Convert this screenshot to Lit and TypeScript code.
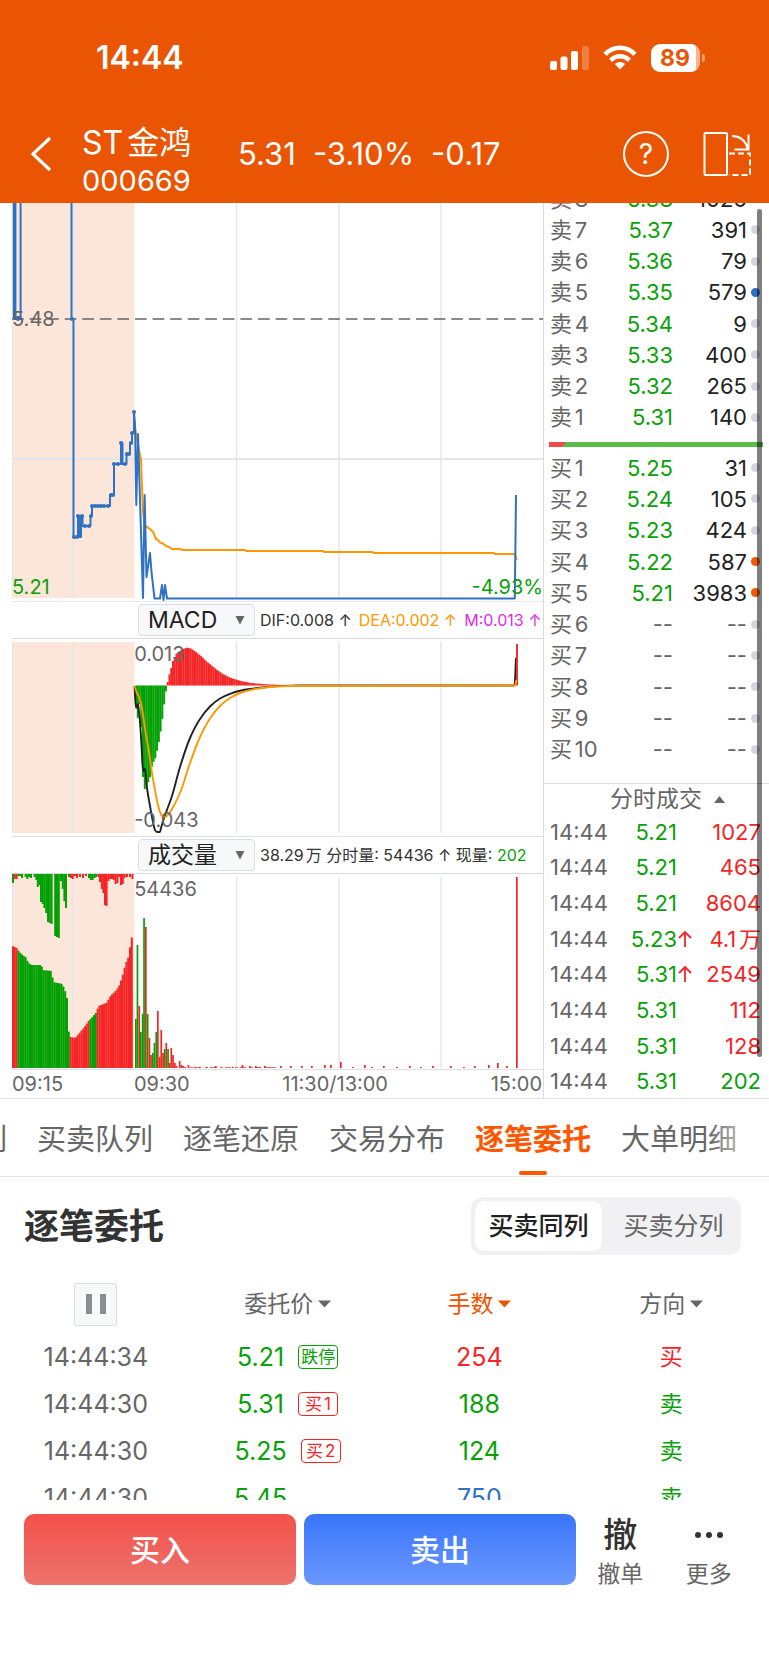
import { LitElement, html, svg, css } from "lit";
import { customElement, state } from "lit/decorators.js";
import { classMap } from "lit/directives/class-map.js";

type Pt = [number, number];
type Bar = [number, number, "r" | "g"];
const RED = "#f52525";
const GREEN = "#04a104";

const line = (pts: Pt[]) => pts.map((p) => p.join(",")).join(" ");

/* Monotone cubic path through the points */
function curve(pts: Pt[]): string {
  const slope = pts.slice(1).map(([x, y], i) => (y - pts[i][1]) / (x - pts[i][0]));
  const tangent = pts.map((_, i) => {
    if (i === 0) return slope[0];
    if (i === pts.length - 1) return slope[i - 1];
    const a = slope[i - 1];
    const b = slope[i];
    return a * b <= 0 ? 0 : (2 * a * b) / (a + b);
  });
  let d = `M${pts[0][0]} ${pts[0][1]}`;
  for (let i = 1; i < pts.length; i++) {
    const [x0, y0] = pts[i - 1];
    const [x1, y1] = pts[i];
    const h = (x1 - x0) / 3;
    d += `C${x0 + h} ${y0 + tangent[i - 1] * h} ${x1 - h} ${y1 - tangent[i] * h} ${x1} ${y1}`;
  }
  return d;
}

/* Linear interpolation of an envelope at x */
function at(env: Pt[], x: number): number {
  for (let i = 1; i < env.length; i++) {
    if (x <= env[i][0]) {
      const [x0, y0] = env[i - 1];
      const [x1, y1] = env[i];
      return y0 + ((y1 - y0) * (x - x0)) / (x1 - x0);
    }
  }
  return env[env.length - 1][1];
}

const auction: Pt[] = [
  [71.5, 203], [71.5, 319], [73.5, 319], [73.5, 537], [78, 537], [78, 516], [79.5, 516], [79.5, 537],
  [81, 537], [81, 516], [82.5, 516], [82.5, 526], [90.5, 526], [90.5, 516], [92, 516], [92, 506],
  [110, 506], [110, 495], [114, 495], [114, 464], [121, 464], [121, 443], [122.5, 443], [122.5, 464],
  [126.5, 464], [126.5, 454], [130, 454], [130, 443], [132, 443], [132, 433], [134, 433], [134, 412],
];
const auctionDots: Pt[] = [
  [72, 319], [74, 537], [77, 537], [78, 516], [82, 516], [85, 526], [89, 526], [91, 516], [92, 506], [95, 506],
  [98, 506], [101, 506], [104, 506], [108, 506], [111, 495], [113, 495], [114, 464], [118, 464], [121, 443],
  [125, 464], [127, 454], [129, 454], [131, 443], [132, 433], [134, 412],
];
const price: Pt[] = [
  [134, 412], [135, 424], [136.3, 505], [138, 434], [143, 598], [144.6, 495], [146.5, 577], [150, 553],
  [151.5, 572], [154.5, 598.5], [160, 598.5], [162, 585], [163.5, 600], [165, 585], [167, 598.5],
  [514.8, 598.5], [516, 495],
];
const average: Pt[] = [
  [134.5, 424], [137, 440], [141, 460], [143, 512], [145, 525], [147, 527], [150, 529], [153, 532], [156, 539],
  [158, 540], [160, 542.5], [163, 543.5], [166, 546], [169, 547], [172, 549], [180, 549], [182, 550],
  [245, 550], [246, 551], [323, 551], [324, 552], [372, 552], [374, 553], [494, 553], [495, 554], [515, 554], [516.5, 560],
];
const dif: Pt[] = [
  [134.5, 686], [136, 708], [138, 704], [139, 712], [140, 722], [141.5, 745], [143, 771], [145, 769], [147, 788],
  [150, 806], [153, 822], [155, 830], [157, 832], [160, 832], [161, 828], [164, 818], [172, 796],
  [180, 767], [190, 738], [200, 719], [210, 706.5], [220, 698.5], [230, 693.8], [240, 690.8], [250, 689],
  [265, 687.2], [280, 686], [300, 685.5], [514.5, 685.5], [516, 658],
];
const dea: Pt[] = [
  [134.5, 686], [136.5, 692], [139, 697], [141, 703], [143, 715], [146, 735], [149, 752], [152, 773], [155, 790],
  [158, 805], [160, 812], [162, 816], [165, 817], [168, 815], [172, 809], [180, 793], [190, 763], [200, 737],
  [210, 718.5], [220, 706], [230, 698], [240, 693], [255, 689], [270, 687], [290, 686], [515, 685.5], [516.5, 680],
];
const macdDown: Pt[] = [
  [135, 702], [137, 720], [139, 704], [141, 730], [143, 791], [145, 788], [147, 783], [149, 781], [151, 768],
  [153, 762], [155, 758], [157, 749], [159, 739], [161, 726], [163, 710], [165, 693], [166.5, 687],
];
const macdUp: Pt[] = [
  [166.5, 683], [168, 676], [170, 669], [172, 661], [175, 654], [179, 651], [182, 649], [186, 647.7], [190, 648.5],
  [195, 652], [200, 656], [205, 661], [210, 665], [216, 670], [222, 674], [230, 678], [240, 681], [250, 683],
  [265, 684.3], [285, 685.2],
];
const matched: Pt[] = [
  [12, 946], [16, 948], [19, 952], [22, 955], [25, 957], [28, 963], [31, 965], [41, 965], [42, 970], [51.5, 971],
  [52.5, 982], [62, 984], [65, 992], [66.5, 998], [67.5, 1029], [70, 1037], [75, 1038], [79, 1033], [84, 1027],
  [88, 1021], [92, 1017], [96, 1012], [98, 1006], [106, 1003], [110, 996], [116, 990], [119, 985], [122, 976],
  [125, 964], [128, 957], [130, 944], [132, 934],
];
const unmatched: Bar[] = [
  [12, 883, "g"], [13.8, 879, "r"], [15.6, 879, "r"], [17.4, 876, "g"], [19.2, 876, "g"], [21, 878, "g"], [24.6, 877, "g"],
  [26.4, 879, "g"], [28.2, 877, "g"], [30, 878, "g"], [33.6, 877, "g"], [35.4, 880, "g"], [36.8, 887, "g"], [38.4, 885, "g"],
  [40, 902, "g"], [41.8, 904, "g"], [43.4, 908, "g"], [45.2, 913, "g"], [47, 922, "g"], [48.8, 923, "g"], [50.6, 924, "g"],
  [54.2, 936, "g"], [56, 937, "g"], [57.8, 938, "g"], [60, 881, "g"], [61.8, 889, "g"], [63.4, 901, "g"], [65, 908, "g"],
  [68, 877, "g"], [70, 878, "r"], [71.8, 879, "r"], [74, 876, "r"], [76, 878, "r"], [79, 877, "r"], [82, 878, "r"],
  [85, 876, "r"], [88, 878, "g"], [89.8, 880, "g"], [91.6, 880, "g"], [93.4, 878, "g"], [95, 877, "g"], [97.4, 877, "r"],
  [99, 882, "r"], [100.8, 889, "r"], [102.4, 893, "r"], [104, 905, "r"], [105.6, 906, "r"], [107.4, 881, "r"],
  [109.2, 879, "r"], [111, 879, "r"], [112.8, 880, "r"], [114.6, 884, "r"], [116.4, 883, "r"], [118.2, 877, "r"],
  [120, 885, "r"], [121.8, 884, "r"], [123.6, 878, "r"], [126, 877, "r"], [129, 877, "r"], [131.4, 879, "r"],
];
const volume: Bar[] = [
  [135, 1019, "g"], [136.6, 945, "g"], [138.4, 1006, "r"], [140, 1032, "g"], [141.8, 1014, "g"], [143.2, 918, "g"],
  [145, 927, "r"], [146.8, 1014, "g"], [148.6, 1038, "r"], [150.2, 1055, "r"], [152, 1053, "g"], [153.6, 1043, "g"],
  [155.4, 1032, "g"], [157, 1011, "r"], [158.8, 1057, "r"], [160.4, 1030, "r"], [162.2, 1053, "r"], [163.8, 1049, "g"],
  [165.4, 1043, "r"], [167.2, 1049, "g"], [168.8, 1063, "r"], [170.4, 1048, "r"], [172.2, 1055, "r"], [174, 1063, "r"],
  [175.6, 1066, "r"], [178.8, 1061, "r"], [180.6, 1065, "r"], [182.4, 1066, "r"], [184.2, 1067, "r"], [187.6, 1065, "r"],
  [194, 1067, "r"], [199, 1067, "r"], [206, 1067, "r"], [215, 1066, "r"], [232, 1067, "r"], [241.6, 1065, "r"],
  [249, 1066, "r"], [255, 1066, "r"], [259, 1067, "r"], [264, 1066, "r"], [268, 1067, "r"], [280, 1066, "r"],
  [290, 1066, "r"], [301, 1066, "r"], [311, 1066, "r"], [324, 1065, "r"], [330, 1065, "r"], [340, 1062, "r"],
  [352, 1067, "r"], [364, 1065, "r"], [371, 1067, "r"], [383, 1066, "r"], [396, 1067, "r"], [409, 1066, "r"],
  [420, 1067, "r"], [432, 1066, "r"], [450, 1066, "r"], [463, 1067, "r"], [474, 1066, "r"], [488, 1065, "r"],
  [497, 1063, "r"], [506, 1066, "r"], [516, 877, "r"],
];

const range = (from: number, to: number, step: number) =>
  Array.from({ length: Math.ceil((to - from) / step) }, (_, i) => from + i * step);

const grid = (top: number, bottom: number) => svg`
  <rect x="12" y=${top} width="122.5" height=${bottom - top} fill="#fce6da"></rect>
  ${[12.5, 73, 236.5, 339, 441].map(
    (x) => svg`<line x1=${x} x2=${x} y1=${top} y2=${bottom} stroke="#e2e6ec" stroke-width="1.4"></line>`
  )}`;

@customElement("price-chart")
class PriceChart extends LitElement {
  static styles = css`
    :host { display: block; }
    svg { display: block; width: 100%; height: 100%; }
  `;
  render() {
    return html`<svg viewBox="12 203 531 398" preserveAspectRatio="none" role="img" aria-label="分时走势">
      ${grid(203, 598)}
      <line x1="12" x2="543" y1="459" y2="459" stroke="#e2e5ed" stroke-width="2"></line>
      <line x1="12" x2="543" y1="319" y2="319" stroke="#666" stroke-width="1.3" stroke-dasharray="11.7 5.87"></line>
      <g fill="none" stroke-width="2" stroke-linejoin="round">
        <polyline points=${line(average)} stroke="#ff9800"></polyline>
        <g stroke="#2f72c4">
          <path d="M14.6 203V319" stroke-width="3.6"></path>
          <path d="M14 319H20.6V203"></path>
          <polyline points=${line(auction)}></polyline>
          <polyline points=${line(price)}></polyline>
        </g>
      </g>
      ${auctionDots.map(([x, y]) => svg`<circle cx=${x} cy=${y} r="2" fill="#2f72c4"></circle>`)}
      <circle cx="18" cy="319" r="2" fill="#2f72c4"></circle>
    </svg>`;
  }
}

@customElement("macd-chart")
class MacdChart extends LitElement {
  static styles = PriceChart.styles;
  render() {
    return html`<svg viewBox="12 639 531 197" preserveAspectRatio="none" role="img" aria-label="MACD">
      ${grid(642, 833)}
      ${range(135, 166, 1.76).map((x) => svg`<rect x=${x} y="685.5" width="1.95" height=${at(macdDown, x + 0.5) - 685.5} fill=${GREEN}></rect>`)}
      ${range(166.7, 285, 1.76).map((x) => svg`<rect x=${x} y=${at(macdUp, x)} width="1.95" height=${685.5 - at(macdUp, x)} fill=${RED}></rect>`)}
      <g fill="none" stroke-width="1.9" stroke-linejoin="round">
        <path d=${curve(dif)} stroke="#222"></path>
        <line x1="517" x2="517" y1="644" y2="685.5" stroke=${RED}></line>
        <path d=${curve(dea)} stroke="#ff9800"></path>
      </g>
    </svg>`;
  }
}

@customElement("volume-chart")
class VolumeChart extends LitElement {
  static styles = PriceChart.styles;
  render() {
    const color = (k: string) => (k === "r" ? RED : GREEN);
    return html`<svg viewBox="12 874 531 195" preserveAspectRatio="none" role="img" aria-label="成交量">
      <rect x="12" y="874" width="122.5" height="4" fill="#fce6da"></rect>
      ${grid(877, 1068)}
      ${range(12, 132, 1.8).map((x) => {
        const green = (x > 17.3 && x < 69.5) || (x > 88.5 && x < 96);
        const y = at(matched, x + 0.5);
        return svg`<rect x=${x} y=${y} width="2" height=${1068 - y} fill=${green ? GREEN : RED}></rect>`;
      })}
      ${unmatched.map(([x, y, k]) => svg`<rect x=${x} y="874" width="2" height=${y - 874} fill=${color(k)}></rect>`)}
      ${volume.map(([x, y, k]) => svg`<rect x=${x} y=${y} width="1.7" height=${1068 - y} fill=${color(k)}></rect>`)}
      <line x1="190" x2="280" y1="1067.5" y2="1067.5" stroke=${RED} stroke-dasharray="3 2 6 4" opacity="0.7"></line>
    </svg>`;
  }
}

type Level = [string, string, string, string?];
const sells: Level[] = [
  ["卖8", "5.38", "1026"], ["卖7", "5.37", "391"], ["卖6", "5.36", "79"], ["卖5", "5.35", "579", "blue"],
  ["卖4", "5.34", "9"], ["卖3", "5.33", "400"], ["卖2", "5.32", "265"], ["卖1", "5.31", "140"],
];
const buys: Level[] = [
  ["买1", "5.25", "31"], ["买2", "5.24", "105"], ["买3", "5.23", "424"], ["买4", "5.22", "587", "orange"],
  ["买5", "5.21", "3983", "orange"], ["买6", "--", "--"], ["买7", "--", "--"], ["买8", "--", "--"],
  ["买9", "--", "--"], ["买10", "--", "--"],
];
const ticks: [string, boolean, string, string][] = [
  ["5.21", false, "1027", "up"], ["5.21", false, "465", "up"], ["5.21", false, "8604", "up"],
  ["5.23", true, "4.1万", "up"], ["5.31", true, "2549", "up"], ["5.31", false, "112", "up"],
  ["5.31", false, "128", "up"], ["5.31", false, "202", "down"],
];

@customElement("order-book")
class OrderBook extends LitElement {
  static styles = css`
    :host { display: flex; flex-direction: column; position: relative; font-size: 22px; color: #666; }
    table { width: 100%; border-collapse: collapse; table-layout: fixed; }
    td, th { padding: 0; font-weight: 400; line-height: 28px; text-align: right; white-space: nowrap; }
    th { text-align: left; padding-left: 6px; }
    .sell { height: 230px; overflow: hidden; display: flex; flex-direction: column; justify-content: flex-end; }
    .sell table { height: 250px; flex: none; }
    .buy table { height: 313px; }
    .name { width: 64px; }
    .price { width: 65px; }
    .dotcol { width: 22px; }
    .green, .down { color: #08a108; }
    .up { color: #f52525; }
    .vol { color: #222; }
    .muted { color: #666; }
    .dot { display: block; width: 9px; height: 9px; margin-left: 4px; border-radius: 50%; background: #d4d7dd; }
    .dot.blue { background: #2a6fc9; }
    .dot.orange { background: #f05a00; }
    .ratio { display: flex; height: 5px; margin: 9px 6px 5px 5px; background: #5bbb47; }
    .ratio i { width: 17px; background: #ee4b4b; clip-path: polygon(0 0, 100% 0, 78% 100%, 0 100%); }
    .fold {
      display: flex; align-items: center; justify-content: center; gap: 12px; width: 100%; height: 31px; margin: 18px 0 0;
      border: 0; border-top: 1px solid #d8dbe1; padding: 0 0 0 22px; background: none; font: inherit; font-size: 23px; color: #666;
      line-height: 28px;
    }
    .ticks { height: 285px; }
    .time { width: 70px; }
    .tprice { width: 63px; }
    .arrow { width: 15px; text-align: left; }
    .arrow svg { display: block; }
    .amount { padding-right: 8px; }
    .thumb {
      position: absolute; top: 6px; bottom: 42px; right: 7px; width: 5px; border-radius: 3px; background: rgba(0, 0, 0, 0.5);
    }
  `;

  private levels(rows: Level[]) {
    return html`<table>
      <colgroup><col class="name" /><col class="price" /><col /><col class="dotcol" /></colgroup>
      ${rows.map(([name, price, vol, dot]) => html`<tr>
        <th scope="row">${name}</th>
        <td class=${price === "--" ? "muted" : "green"}>${price}</td>
        <td class=${vol === "--" ? "muted" : "vol"}>${vol}</td>
        <td><span class="dot ${dot ?? ""}"></span></td>
      </tr>`)}
    </table>`;
  }

  render() {
    return html`
      <div class="sell">${this.levels(sells)}</div>
      <div class="ratio"><i></i></div>
      <div class="buy">${this.levels(buys)}</div>
      <button class="fold">分时成交
        <svg width="11" height="7" viewBox="0 0 11 7"><path d="M5.5 0 11 7H0z" fill="#666"></path></svg>
      </button>
      <table class="ticks">
        <colgroup><col class="time" /><col class="tprice" /><col class="arrow" /><col /></colgroup>
        ${ticks.map(([price, rise, vol, dir]) => html`<tr>
          <th scope="row">14:44</th>
          <td class="green">${price}</td>
          <td class="arrow">${rise
            ? html`<svg width="15" height="18" viewBox="0 0 15 18"><path d="M8 17V2M2 8l6-6 6 6" fill="none" stroke="#f52525" stroke-width="1.8"></path></svg>`
            : ""}</td>
          <td class="amount ${dir}">${vol}</td>
        </tr>`)}
      </table>
      <div class="thumb"></div>`;
  }
}

const orders = [
  { time: "14:44:34", price: "5.21", tag: "跌停", tagDir: "down", hands: "254", handsCls: "up", side: "买", sideCls: "up" },
  { time: "14:44:30", price: "5.31", tag: "买1", tagDir: "up", hands: "188", handsCls: "down", side: "卖", sideCls: "down" },
  { time: "14:44:30", price: "5.25", tag: "买2", tagDir: "up", hands: "124", handsCls: "down", side: "卖", sideCls: "down" },
  { time: "14:44:30", price: "5.45", tag: "", tagDir: "none", hands: "750", handsCls: "blue", side: "卖", sideCls: "down" },
];

@customElement("order-list")
class OrderList extends LitElement {
  static styles = css`
    :host { display: block; height: 243px; padding-right: 2px; overflow: hidden; }
    table { width: 100%; border-collapse: collapse; table-layout: fixed; color: #666; }
    th, td { padding: 0; text-align: center; font-weight: 400; font-size: 25px; line-height: 32px; }
    th { padding-top: 18px; font-size: 23px; }
    td:last-child { font-size: 23px; }
    thead tr { height: 76px; }
    tbody tr { height: 47px; }
    .sort {
      display: inline-flex; align-items: center; gap: 5px; border: 0; padding: 0; background: none; font: inherit; color: inherit;
    }
    .sort.on { color: #f05300; }
    .pause {
      display: inline-flex; align-items: center; justify-content: center; width: 43px; height: 43px; padding: 0; margin: 0;
      vertical-align: middle; border: 1px solid #d9dde3; border-radius: 3px; background: #f7f8fa;
    }
    .quote { display: flex; align-items: center; justify-content: center; gap: 14px; }
    .tag {
      box-sizing: border-box; min-width: 40px; height: 24px; border: 1px solid currentColor; border-radius: 4px;
      font-size: 17px; line-height: 22px;
    }
    .tag.none { border-color: transparent; }
    .up { color: #f52525; }
    .down { color: #08a108; }
    .blue { color: #2f72c4; }
  `;

  private sort(label: string, on = false) {
    return html`<button class=${classMap({ sort: true, on })}>${label}
      <svg width="13" height="8" viewBox="0 0 13 8"><path d="M0 .5h13L6.5 7.5z" fill="currentColor"></path></svg>
    </button>`;
  }

  render() {
    return html`<table>
      <thead><tr>
        <th><button class="pause" aria-label="暂停">
          <svg width="20" height="20" viewBox="0 0 20 20"><path d="M0 0h6v20H0zM14 0h6v20h-6z" fill="#8b8b92"></path></svg>
        </button></th>
        <th>${this.sort("委托价")}</th><th>${this.sort("手数", true)}</th><th>${this.sort("方向")}</th>
      </tr></thead>
      <tbody>${orders.map((o) => html`<tr>
        <td>${o.time}</td>
        <td><span class="quote"><span class="down">${o.price}</span><span class="tag ${o.tagDir}">${o.tag}</span></span></td>
        <td class=${o.handsCls}>${o.hands}</td>
        <td class=${o.sideCls}>${o.side}</td>
      </tr>`)}</tbody>
    </table>`;
  }
}

@customElement("app-root")
class AppRoot extends LitElement {
  static styles = css`
    :host {
      display: block; min-height: 100vh; background: #fff; color: #222; overflow: hidden;
      font-family: Inter, "Noto Sans CJK SC", sans-serif; text-autospace: normal;
    }
    button, select { font-family: inherit; color: inherit; }
    .top { background: #ea5504; color: #fff; height: 203px; display: flex; flex-direction: column; }
    .status { display: flex; align-items: center; height: 115px; padding: 0 69px 0 96px; box-sizing: border-box; }
    .clock { flex: 1; font-size: 32px; font-weight: 600; line-height: 40px; }
    .signals { display: flex; align-items: center; gap: 14px; }
    .battery {
      display: flex; align-items: center; justify-content: center; width: 49px; height: 28px; border-radius: 9px;
      background: linear-gradient(90deg, #fff 91%, #f6b48f 91%); color: #ea5504; font-size: 23px; font-weight: 700; position: relative;
    }
    .battery span { padding-right: 1px; }
    .battery::after {
      content: ""; position: absolute; left: 51px; top: 10px; width: 3px; height: 8px; border-radius: 0 4px 4px 0; background: #f3a077;
    }
    .nav { display: flex; align-items: center; height: 78px; padding: 0 17px 0 28px; }
    .icon { display: flex; border: 0; padding: 0; background: none; }
    .stock { margin: 0 0 0 28px; padding-top: 15px; width: 156px; font-size: 29px; line-height: 38px; font-weight: 400; }
    .stock .name { display: block; font-size: 32px; white-space: nowrap; }
    .quote { flex: 1; display: flex; gap: 17px; font-size: 31px; line-height: 40px; white-space: nowrap; }
    .help {
      width: 46px; height: 46px; margin-right: 34px; border: 2px solid #fff; border-radius: 50%; padding: 0;
      background: none; font-size: 28px; line-height: 40px;
    }
    .market { display: grid; grid-template-columns: minmax(0, 1fr) 225px; height: 896px; border-bottom: 1px solid #dfe1e5; box-sizing: border-box; }
    .charts { border-right: 1px solid #d8dbe1; font-size: 20px; line-height: 24px; color: #666; }
    .pane { position: relative; margin-left: 12px; border-bottom: 1px solid #dfe1e6; }
    .pane.price { height: 398px; border-color: #e8eaee; }
    .pane.lower { border-top: 1px solid #d5d8de; height: 197px; }
    .pane.vol { height: 195px; }
    .pane > * { height: 100%; }
    .pane > .mark { position: absolute; height: auto; }
    .base { left: 0; top: 104px; }
    .low { left: 0; bottom: 2px; color: #08a108; }
    .pct { right: 0; bottom: 2px; color: #08a108; }
    .peak { left: 23%; top: 3px; }
    .trough { left: 23%; bottom: 4px; }
    .bar {
      display: flex; align-items: center; gap: 5px; height: 36px; padding-left: 138px; font-size: 16px; line-height: 20px;
      color: #333; white-space: nowrap;
    }
    .pick { position: relative; display: flex; flex: none; }
    .pick select {
      appearance: none; width: 117px; height: 32px; border: 1px solid #dadde3; border-radius: 4px; background: #f7f8fa;
      padding: 0 0 0 9px; font-size: 23px; color: #222;
    }
    .pick svg { position: absolute; right: 10px; top: 11px; pointer-events: none; }
    .values { display: flex; gap: 7px; }
    .dea { color: #ff9800; }
    .m { color: #e22be2; }
    .now { color: #08a108; }
    .hours { display: flex; height: 28px; align-items: center; margin-left: 12px; padding-right: 1px; }
    .hours span:nth-child(1) { width: 23%; }
    .hours span:nth-child(2) { width: 28%; }
    .hours span:nth-child(3) { flex: 1; }
    .tabs {
      display: flex; justify-content: flex-end; gap: 30px; height: 78px; padding-right: 32px; border-bottom: 1px solid #e4e5e8;
      position: relative; box-sizing: border-box; overflow: hidden;
    }
    .tabs::after {
      content: ""; position: absolute; top: 0; bottom: 0; right: 0; width: 62px; pointer-events: none;
      background: linear-gradient(90deg, rgba(255, 255, 255, 0), #fff);
    }
    .tab {
      position: relative; flex: none; border: 0; padding: 5px 0 0; background: none; font-size: 29px; line-height: 40px; color: #666;
    }
    .tab.on { color: #ff5600; font-weight: 700; }
    .tab.on::after {
      content: ""; position: absolute; left: 50%; bottom: 1px; width: 28px; height: 4px; margin-left: -14px;
      border-radius: 2px; background: #ff5600;
    }
    .head { display: flex; align-items: center; justify-content: space-between; padding: 20px 28px 2px 24px; }
    .head h2 { margin: 0; font-size: 35px; line-height: 44px; font-weight: 700; color: #333; }
    .seg { display: flex; gap: 8px; padding: 4px; border-radius: 12px; background: #f1f1f4; }
    .seg button {
      width: 127px; height: 50px; border: 0; border-radius: 10px; padding: 0; background: none; font-size: 25px; line-height: 32px;
      color: #666;
    }
    .seg button.on { background: #fff; color: #222; font-weight: 500; }
    .actions { display: flex; align-items: stretch; padding: 14px 16px 80px 24px; }
    .trade { flex: 1; height: 71px; border: 0; border-radius: 10px; padding: 0 0 4px; color: #fff; font-size: 30px; font-weight: 500; }
    .buy { background: linear-gradient(#f4504a, #ec736d); margin-right: 8px; }
    .sell { background: linear-gradient(#3975fa, #6b98ff); }
    .more { display: flex; width: 177px; }
    .more button {
      flex: 1; display: flex; flex-direction: column; align-items: center; justify-content: space-between;
      border: 0; padding: 0; background: none; font-size: 23px; line-height: 22px; color: #666;
    }
    .glyph { display: flex; align-items: center; height: 42px; font-size: 34px; font-weight: 500; color: #333; }
  `;

  @state() private tab = "逐笔委托";
  @state() private mode = "买卖同列";

  private pick(label: string, options: string[]) {
    return html`<span class="pick">
      <select aria-label=${label}>${options.map((o) => html`<option>${o}</option>`)}</select>
      <svg width="10" height="10" viewBox="0 0 10 10"><path d="M.5 1h9L5 9.5z" fill="#666"></path></svg>
    </span>`;
  }

  render() {
    return html`
      <header class="top">
        <div class="status">
          <span class="clock">14:44</span>
          <div class="signals">
            <svg width="39" height="26" viewBox="0 0 39 26" fill="#fff">
              <rect x="0" y="16" width="7" height="9" rx="2"></rect><rect x="10.5" y="11.5" width="7" height="13.5" rx="2"></rect>
              <rect x="21" y="6" width="7" height="19" rx="2"></rect><rect x="32" y="1" width="7" height="24" rx="2" opacity=".25"></rect>
            </svg>
            <svg width="34" height="25" viewBox="0 0 34 25" fill="none" stroke="#fff" stroke-width="4.6">
              <path d="M2 9.4C10.500 .6 23.500 .6 32 9.400"></path><path d="M7.600 15.300c5.300-5.400 13.500-5.400 18.800 0"></path>
              <path d="M17 24.500l-5.200-5.400c3-2.800 7.400-2.800 10.400 0z" fill="#fff" stroke="none"></path>
            </svg>
            <span class="battery"><span>89</span></span>
          </div>
        </div>
        <div class="nav">
          <button class="icon" aria-label="返回">
            <svg width="26" height="38" viewBox="0 0 26 38"><path d="M22 3 5 19l17 16" fill="none" stroke="#fff" stroke-width="3.2"></path></svg>
          </button>
          <h1 class="stock"><span class="name">ST金鸿</span>000669</h1>
          <div class="quote"><span>5.31</span><span>-3.10%</span><span>-0.17</span></div>
          <button class="help" aria-label="帮助">?</button>
          <button class="icon" aria-label="横屏">
            <svg width="49" height="46" viewBox="0 0 49 46" fill="none" stroke="#fff" stroke-width="2">
              <rect x="1.500" y="2" width="22.500" height="42" rx="1"></rect>
              <path d="M26 22.500h21V44H26" stroke-dasharray="6 3"></path>
              <path d="M29 5c7 0 14 4 15.500 13M45.500 3.500V18.500H31.500"></path>
            </svg>
          </button>
        </div>
      </header>

      <section class="market">
        <div class="charts">
          <div class="pane price">
            <price-chart></price-chart>
            <span class="mark base">5.48</span><span class="mark low">5.21</span><span class="mark pct">-4.93%</span>
          </div>
          <div class="bar">
            ${this.pick("指标", ["MACD", "KDJ", "RSI"])}
            <span class="values"><span>DIF:0.008 ↑</span><span class="dea">DEA:0.002 ↑</span><span class="m">M:0.013 ↑</span></span>
          </div>
          <div class="pane lower">
            <macd-chart></macd-chart>
            <span class="mark peak">0.013</span><span class="mark trough">-0.043</span>
          </div>
          <div class="bar">
            ${this.pick("副图", ["成交量", "量比"])}
            <span>38.29万 分时量: 54436 ↑ 现量: <span class="now">202</span></span>
          </div>
          <div class="pane lower vol">
            <volume-chart></volume-chart>
            <span class="mark peak">54436</span>
          </div>
          <div class="hours"><span>09:15</span><span>09:30</span><span>11:30/13:00</span><span>15:00</span></div>
        </div>
        <order-book></order-book>
      </section>

      <nav class="tabs">
        ${["分时明列", "买卖队列", "逐笔还原", "交易分布", "逐笔委托", "大单明细"].map(
          (t) => html`<button class=${classMap({ tab: true, on: t === this.tab })} @click=${() => (this.tab = t)}>${t}</button>`
        )}
      </nav>

      <section>
        <div class="head">
          <h2>逐笔委托</h2>
          <div class="seg">
            ${["买卖同列", "买卖分列"].map(
              (m) => html`<button class=${classMap({ on: m === this.mode })} @click=${() => (this.mode = m)}>${m}</button>`
            )}
          </div>
        </div>
        <order-list></order-list>
      </section>

      <footer class="actions">
        <button class="trade buy">买入</button>
        <button class="trade sell">卖出</button>
        <div class="more">
          <button><span class="glyph">撤</span>撤单</button>
          <button><span class="glyph"><svg width="30" height="8" viewBox="0 0 30 8" fill="#333"><circle cx="4" cy="4" r="3"></circle><circle cx="15" cy="4" r="3"></circle><circle cx="26" cy="4" r="3"></circle></svg></span>更多</button>
        </div>
      </footer>
    `;
  }
}
